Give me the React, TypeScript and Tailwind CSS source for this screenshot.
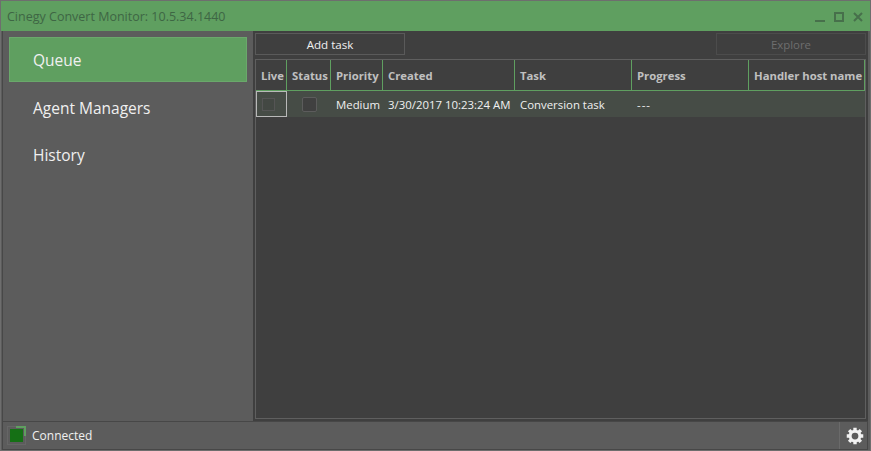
const font = "font-['Open_Sans','Noto_Sans',sans-serif]";

const columns = [
  { label: 'Live', w: 'w-[31px]' },
  { label: 'Status', w: 'w-[44px]' },
  { label: 'Priority', w: 'w-[52px]' },
  { label: 'Created', w: 'w-[132px]' },
  { label: 'Task', w: 'w-[117px]' },
  { label: 'Progress', w: 'w-[117px]' },
  { label: 'Handler host name', w: 'w-[116px]' },
];

function Gear() {
  return (
    <svg width="18" height="18" viewBox="0 0 24 24" fill="none" stroke="#f2f2f2" strokeWidth="4">
      <circle cx="12" cy="12" r="6.5" />
      <path strokeWidth="4.5" d="M12 1v4M12 19v4M1 12h4M19 12h4M4.2 4.2l2.8 2.8M17 17l2.8 2.8M4.2 19.8 7 17M17 7l2.8-2.8" />
    </svg>
  );
}

export default function App() {
  return (
    <div className={`${font} w-[871px] h-[451px] flex flex-col bg-[#5c5c5c] border border-[#6e6e6e] text-[11.4px] overflow-hidden`}>
      {/* title bar */}
      <div className="h-[30px] shrink-0 flex items-center bg-[#5f9f60] pl-[6px] pr-[7px] text-[#3e6644]">
        <span className="flex-1 text-[12.5px] pt-[3px]">Cinegy Convert Monitor: 10.5.34.1440</span>
        <div className="flex items-center gap-[9px] pt-[2px]">
          <svg width="10" height="10" viewBox="0 0 10 10" fill="#47704b"><rect x="0" y="8" width="10" height="2" /></svg>
          <svg width="10" height="10" viewBox="0 0 10 10" fill="none" stroke="#47704b" strokeWidth="2"><rect x="1" y="1" width="8" height="8" /></svg>
          <svg width="10" height="10" viewBox="0 0 10 10" fill="none" stroke="#47704b" strokeWidth="2"><path d="M1 1l8 8M9 1l-8 8" /></svg>
        </div>
      </div>

      <div className="flex-1 min-h-0 flex pl-[1px] pr-[2px]">
        {/* sidebar */}
        <div className="w-[251px] shrink-0 border-l border-[#484848] pl-[6px] pr-[6px] pt-[6px] flex flex-col text-[#f0f0f0] text-[15.5px]">
          <div className="h-[45px] flex items-center pl-[23px] pt-[2px] bg-[#5f9f60] border border-[#6aa86b]">Queue</div>
          <div className="h-[47px] mt-[2px] flex items-center pl-[24px] pt-[2px]">Agent Managers</div>
          <div className="h-[47px] flex items-center pl-[24px] pt-[2px]">History</div>
        </div>

        {/* main */}
        <div className="flex-1 min-w-0 flex flex-col bg-[#3f3f3f] pl-[2px] pr-[2px] pt-[2px] pb-[2px]">
          <div className="h-[22px] shrink-0 flex justify-between">
            <div className="w-[150px] flex items-center justify-center pt-[2px] border border-[#5a5a5a] text-[11.6px] text-[#f0f0f0]">Add task</div>
            <div className="w-[150px] flex items-center justify-center pt-[2px] border border-[#4c4c4c] text-[11.4px] text-[#6e6e6e]">Explore</div>
          </div>
          <div className="flex-1 min-h-0 mt-[4px] border border-[#5f5f5f]">
            <div className="h-[31px] flex border-b border-[#5f9f60] font-bold text-[11.3px] text-[#c0c0c0]">
              {columns.map(c => (
                <div key={c.label} className={`${c.w} shrink-0 flex items-center pl-[5px] pt-[2px] border-r border-[#5f9f60] whitespace-nowrap`}>{c.label}</div>
              ))}
            </div>
            <div className="h-[26px] flex items-center bg-[#464c46] text-[#f0f0f0] whitespace-nowrap">
              <div className="w-[31px] h-[26px] shrink-0 flex items-center justify-center border border-[#b9b9b9]">
                <div className="w-[13px] h-[13px] border border-[#555555] bg-[#434843] -ml-[6px]" />
              </div>
              <div className="w-[44px] shrink-0 flex items-center justify-center">
                <div className="w-[15px] h-[15px] rounded-[2px] border border-[#5c5c5c] bg-[#404040]" />
              </div>
              <div className="w-[52px] shrink-0 pl-[5px] pt-[2px]">Medium</div>
              <div className="w-[132px] shrink-0 pl-[5px] pt-[2px]">3/30/2017 10:23:24 AM</div>
              <div className="w-[117px] shrink-0 pl-[5px] pt-[2px]">Conversion task</div>
              <div className="w-[117px] shrink-0 pl-[5px] pt-[2px] tracking-[1px]">---</div>
            </div>
          </div>
        </div>
      </div>

      {/* status bar */}
      <div className="h-[29px] shrink-0 flex items-center border-t border-[#474747] ml-[1px] mr-[2px] border-l border-r border-b text-[12px] text-[#f0f0f0]">
        <div className="relative w-[19px] h-[19px] ml-[4px] mr-[6px] -mt-[1px] shrink-0 border border-[#666666] flex items-center justify-center">
          <div className="absolute right-[-1px] top-[-1px] w-[10px] h-[10px] border-t-2 border-r-2 border-[#5f9f60]" />
          <div className="relative w-[13px] h-[13px] bg-[#157015]" />
        </div>
        <span className="flex-1">Connected</span>
        <div className="w-[28px] h-full flex items-center justify-center border-l border-[#6a6a6a]"><div className="ml-[3px]"><Gear /></div></div>
      </div>
    </div>
  );
}
